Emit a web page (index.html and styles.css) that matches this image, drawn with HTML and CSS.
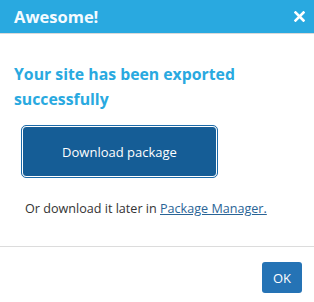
FILE: index.html
```html
<!DOCTYPE html>
<html>
<head>
<meta charset="utf-8">
<link rel="stylesheet" href="styles.css">
</head>
<body>
<div class="dialog">
  <div class="header">
    <span class="title">Awesome!</span>
    <svg class="close" width="11" height="11" viewBox="0 0 11 11"><path d="M1.5 1.5 L9.5 9.5 M9.5 1.5 L1.5 9.5" stroke="#fff" stroke-width="2.6" stroke-linecap="square"/></svg>
  </div>
  <div class="body">
    <h2 class="headline">Your site has been exported successfully</h2>
    <button class="download">Download package</button>
    <p class="later">Or download it later in <a href="#">Package Manager.</a></p>
  </div>
  <div class="footer">
    <button class="ok">OK</button>
  </div>
</div>
</body>
</html>
```
FILE: styles.css
```css
html, body {
  margin: 0;
  padding: 0;
  background: #fff;
}
.dialog {
  width: 314px;
  height: 302px;
  font-family: "Open Sans", "Noto Sans", sans-serif;
  display: flex;
  flex-direction: column;
}
.header {
  height: 33px;
  background: #29a9e0;
  border-bottom: 1px solid #d9d9d9;
  display: flex;
  align-items: center;
  justify-content: space-between;
  padding: 0 9px 0 14px;
}
.title {
  color: #f4fbff;
  font-weight: 700;
  font-size: 16.5px;
}
.close {
  display: block;
}
.body {
  padding: 0 14px;
  height: 213px;
  border-bottom: 1px solid #dcdcdc;
  box-sizing: border-box;
  padding-top: 28px;
}
.headline {
  margin: 0;
  color: #29a9e0;
  font-size: 15.8px;
  line-height: 25px;
  font-weight: 700;
}
.download {
  margin: 14px 0 0 8px;
  width: 195px;
  height: 51px;
  background: #155d96;
  color: #fff;
  border: 1px solid #fff;
  outline: 1px solid #1c6aa8;
  border-radius: 4px;
  font-family: inherit;
  font-size: 13px;
  display: block;
}
.later {
  margin: 23px 0 0 11px;
  color: #333;
  font-size: 12.6px;
}
.later a {
  color: #2a6496;
}
.footer {
  display: flex;
  justify-content: flex-end;
  padding: 15px 12px 0 0;
}
.ok {
  width: 40px;
  height: 31px;
  background: #2573b5;
  color: #fff;
  border: none;
  border-radius: 3px;
  font-family: inherit;
  font-size: 13px;
  padding: 0;
}
```
